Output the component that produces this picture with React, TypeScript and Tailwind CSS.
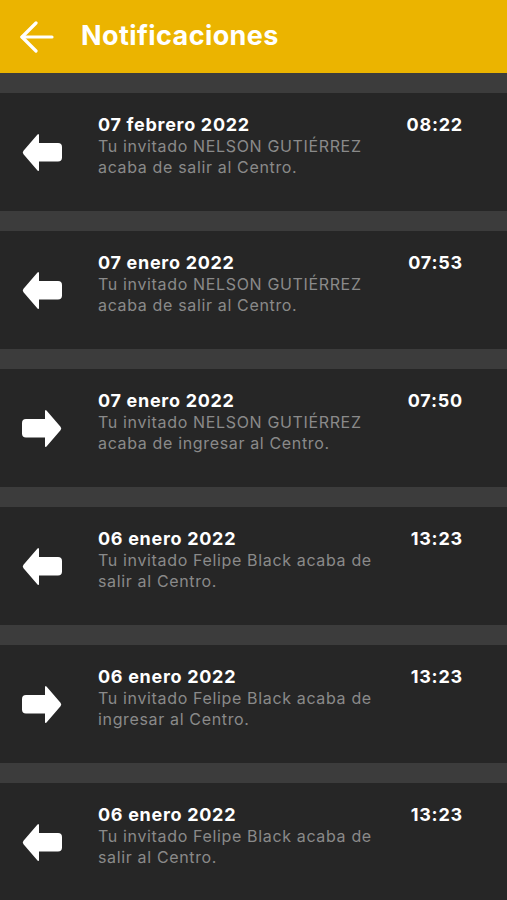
import React from 'react'

type Notif = {
  date: string
  time: string
  lines: string[]
  dir: 'in' | 'out'
}

const items: Notif[] = [
  { date: '07 febrero 2022', time: '08:22', dir: 'out', lines: ['Tu invitado NELSON GUTIÉRREZ', 'acaba de salir al Centro.'] },
  { date: '07 enero 2022', time: '07:53', dir: 'out', lines: ['Tu invitado NELSON GUTIÉRREZ', 'acaba de salir al Centro.'] },
  { date: '07 enero 2022', time: '07:50', dir: 'in', lines: ['Tu invitado NELSON GUTIÉRREZ', 'acaba de ingresar al Centro.'] },
  { date: '06 enero 2022', time: '13:23', dir: 'out', lines: ['Tu invitado Felipe Black acaba de', 'salir al Centro.'] },
  { date: '06 enero 2022', time: '13:23', dir: 'in', lines: ['Tu invitado Felipe Black acaba de', 'ingresar al Centro.'] },
  { date: '06 enero 2022', time: '13:23', dir: 'out', lines: ['Tu invitado Felipe Black acaba de', 'salir al Centro.'] },
]

// flecha sólida con cola redondeada
const DirArrow = ({ dir }: { dir: 'in' | 'out' }) => (
  <svg
    width="40"
    height="39"
    viewBox="0 0 40 39"
    className={dir === 'in' ? 'scale-x-[-1]' : ''}
  >
    <path
      d="M1.5 17.8 L15.5 1.5 Q17 0 17 2.5 L17 10 L36 10 Q40 10 40 14 L40 24.5 Q40 28.5 36 28.5 L17 28.5 L17 36.5 Q17 39 15.5 37.5 L1.5 21.2 Q0 19.5 1.5 17.8 Z"
      fill="#ffffff"
    />
  </svg>
)

const App: React.FC = () => {
  return (
    <div className="w-[507px] h-[900px] overflow-hidden bg-[#3c3c3c] font-['Inter','Liberation_Sans',sans-serif]">
      <div className="h-[73px] bg-[#ebb400] flex items-center">
        <div className="pl-[20px] w-[81px]">
          <svg width="34" height="32" viewBox="0 0 34 32" fill="none" stroke="#ffffff" strokeWidth="3.2" strokeLinecap="round" strokeLinejoin="round">
            <path d="M2 16 H32" />
            <path d="M16 2 L2 16 L16 30" />
          </svg>
        </div>
        <div className="text-white text-[27px] font-bold tracking-[0.4px]">Notificaciones</div>
      </div>

      <div className="flex flex-col gap-[20px] pt-[20px]">
        {items.map((n, i) => (
          <div key={i} className="h-[118px] bg-[#262626] flex shrink-0">
            <div className="w-[98px] pl-[22px] flex items-center">
              <DirArrow dir={n.dir} />
            </div>
            <div className="flex-1 pt-[21px] pr-[44px] flex">
              <div className="flex-1">
                <div className="text-white text-[18px] leading-[22px] font-bold tracking-[0.7px]">{n.date}</div>
                <div className="text-[#8a8a8a] text-[16px] leading-[21px] tracking-[0.65px]">
                  {n.lines.map((l, j) => (
                    <div key={j} className="whitespace-nowrap">{l}</div>
                  ))}
                </div>
              </div>
              <div className="text-white text-[18px] leading-[22px] font-bold tracking-[0.8px]">{n.time}</div>
            </div>
          </div>
        ))}
      </div>
    </div>
  )
}

export default App
